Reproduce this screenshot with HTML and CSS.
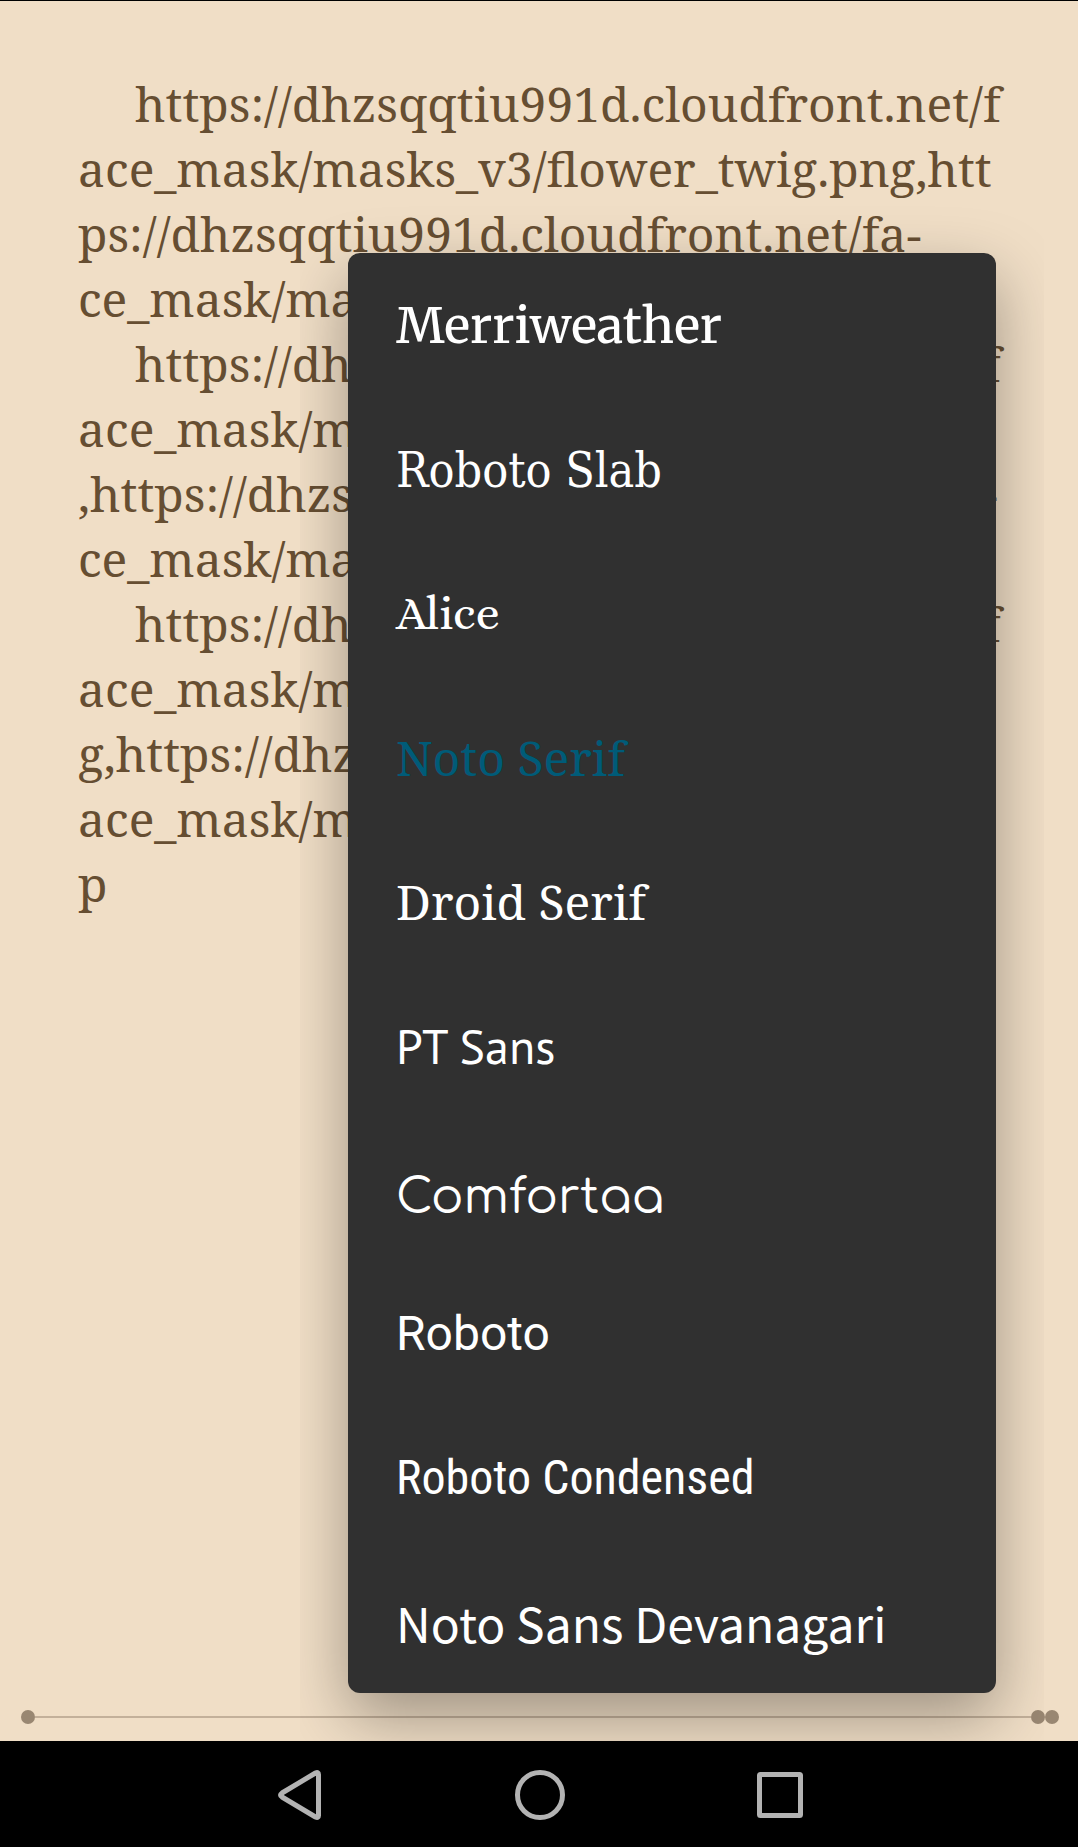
FILE: index.html
```html
<!DOCTYPE html>
<html lang="en">
<head>
<meta charset="utf-8">
<meta name="viewport" content="width=device-width, initial-scale=1">
<title>Reader</title>
<link rel="stylesheet" href="styles.css">
</head>
<body>
<main class="reader">
  <article class="page">
    <p>https://dhzsqqtiu991d.cloudfront.net/f<br>ace_mask/masks_v3/flower_twig.png,htt<br>ps://dhzsqqtiu991d.cloudfront.net/fa-<br>ce_mask/masks_v3/flower_twig.webp</p>
    <p>https://dhzsqqtiu991d.cloudfront.net/f<br>ace_mask/masks_v3/flower_cat.png<br>,https://dhzsqqtiu991d.cloudfront.net/fa-<br>ce_mask/masks_v3/flower_cat.webp</p>
    <p>https://dhzsqqtiu991d.cloudfront.net/f<br>ace_mask/masks_v3/flower_bear.pn<br>g,https://dhzsqqtiu991d.cloudfront.net/f<br>ace_mask/masks_v3/flower_bear.web<br>p</p>
  </article>
  <div class="progress">
    <span class="dot"></span><span class="track"></span><span class="dot"></span><span class="dot"></span>
  </div>
  <ul class="menu" aria-label="Font">
    <li><button class="font merriweather" type="button">Merriweather</button></li>
    <li><button class="font slab" type="button">Roboto Slab</button></li>
    <li><button class="font alice" type="button">Alice</button></li>
    <li><button class="font serif selected" type="button" aria-current="true">Noto Serif</button></li>
    <li><button class="font serif" type="button">Droid Serif</button></li>
    <li><button class="font pt-sans" type="button">PT Sans</button></li>
    <li><button class="font comfortaa" type="button">Comfortaa</button></li>
    <li><button class="font roboto" type="button">Roboto</button></li>
    <li><button class="font condensed" type="button">Roboto Condensed</button></li>
    <li><button class="font devanagari" type="button">Noto Sans Devanagari</button></li>
  </ul>
</main>
<nav class="system-bar" aria-label="System">
  <button type="button" aria-label="Back"><svg viewBox="0 0 56 56" width="56" height="56"><path d="M46.500 7.500V48.500Q46.500 51.500 43.500 50L10 30Q7 28 10 26L43.500 6Q46.500 4.500 46.500 7.500Z"/></svg></button>
  <button type="button" aria-label="Home"><svg viewBox="0 0 56 56" width="56" height="56"><circle cx="28" cy="28" r="22.500"/></svg></button>
  <button type="button" aria-label="Recent apps"><svg viewBox="0 0 56 56" width="56" height="56"><rect x="7.500" y="7.500" width="41" height="41" rx="1"/></svg></button>
</nav>
</body>
</html>
```
FILE: styles.css
```css
* {
  box-sizing: border-box;
}

body {
  margin: 0;
  min-height: 100vh;
  display: flex;
  flex-direction: column;
  background: #f0dec6;
}

button {
  border: 0;
  padding: 0;
  background: none;
  color: inherit;
  cursor: pointer;
}

.reader {
  position: relative;
  flex: 1;
  display: flex;
  flex-direction: column;
  justify-content: space-between;
  border-top: 1px solid #000;
  overflow: hidden;
}

.page {
  padding: 70px 0 0 78px;
  color: #664e32;
  font: 48px/65px "Noto Serif", "DejaVu Serif Condensed", serif;
  white-space: nowrap;
}

.page p {
  margin: 0;
  text-indent: 57px;
}

.progress {
  display: flex;
  align-items: center;
  padding: 0 19px 17px 21px;
}

.dot {
  width: 14px;
  height: 14px;
  border-radius: 50%;
  background: #998772;
}

.track {
  flex: 1;
  height: 2px;
  background: #c3b09a;
}

.menu {
  position: absolute;
  top: 252px;
  right: 82px;
  width: 648px;
  margin: 0;
  padding: 0;
  list-style: none;
  border-radius: 12px;
  background: #303030;
  box-shadow: 0 24px 64px rgba(0, 0, 0, 0.34);
  clip-path: inset(-60px -48px -48px -48px);
}

.font {
  display: block;
  width: 100%;
  height: 144px;
  padding: 2px 48px 0;
  color: #fff;
  font-size: 48px;
  line-height: 64px;
  text-align: left;
}

.font.selected {
  color: #005b78;
}

.font.merriweather {
  font-family: Merriweather, "DejaVu Serif", serif;
  font-size: 49px;
  font-weight: 500;
}

.font.slab {
  font-family: "Roboto Slab", "DejaVu Serif Condensed", serif;
}

.font.alice {
  padding-top: 0;
  font-family: Alice, "Liberation Serif", serif;
}

.font.serif {
  font-family: "Noto Serif", "DejaVu Serif Condensed", serif;
}

.font.pt-sans {
  font-family: "PT Sans", "Noto Sans", sans-serif;
}

.font.comfortaa {
  padding-top: 18px;
  font-family: Comfortaa, "DejaVu Sans", sans-serif;
}

.font.roboto {
  font-family: Roboto, sans-serif;
}

.font.condensed {
  font-family: "Roboto Condensed", "Liberation Sans Narrow", sans-serif;
}

.font.devanagari {
  font-family: "Noto Sans CJK JP", "Noto Sans", sans-serif;
}

.system-bar {
  display: flex;
  justify-content: center;
  height: 106px;
  padding: 2px 0 0 2px;
  background: #000;
}

.system-bar button {
  display: grid;
  place-items: center;
  width: 240px;
}

.system-bar svg {
  fill: none;
  stroke: #b3b3b3;
  stroke-width: 5;
  stroke-linejoin: round;
}
```
